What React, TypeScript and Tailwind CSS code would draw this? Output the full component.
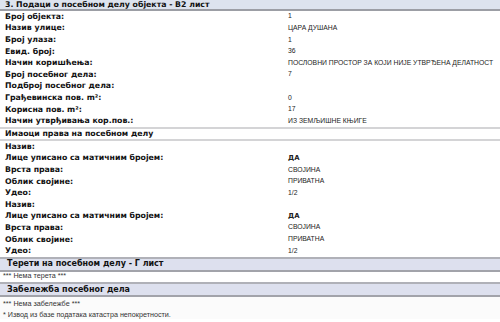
import React from 'react';

type Row = { label: string; value?: string; strong?: boolean };

const objectRows: Row[] = [
  { label: 'Број објекта:', value: '1' },
  { label: 'Назив улице:', value: 'ЦАРА ДУШАНА' },
  { label: 'Број улаза:', value: '1' },
  { label: 'Евид. број:', value: '36' },
  { label: 'Начин коришћења:', value: 'ПОСЛОВНИ ПРОСТОР ЗА КОЈИ НИЈЕ УТВРЂЕНА ДЕЛАТНОСТ' },
  { label: 'Број посебног дела:', value: '7' },
  { label: 'Подброј посебног дела:', value: '' },
  { label: 'Грађевинска пов. m²:', value: '0' },
  { label: 'Корисна пов. m²:', value: '17' },
  { label: 'Начин утврђивања кор.пов.:', value: 'ИЗ ЗЕМЉИШНЕ КЊИГЕ' },
];

const owner: Row[] = [
  { label: 'Назив:' },
  { label: 'Лице уписано са матичним бројем:', value: 'ДА', strong: true },
  { label: 'Врста права:', value: 'СВОЈИНА' },
  { label: 'Облик својине:', value: 'ПРИВАТНА' },
  { label: 'Удео:', value: '1/2' },
];

const labelFont = "font-['DejaVu_Sans',Verdana,sans-serif]";
const valueFont = "font-['Liberation_Sans',Tahoma,sans-serif]";

function DataRow({ row }: { row: Row }) {
  return (
    <div className="flex h-[11.6px] items-center leading-none">
      <div className={`${labelFont} w-[288px] shrink-0 pl-[5px] text-[7.8px] font-bold text-[#111]`}>{row.label}</div>
      <div
        className={`${row.strong ? labelFont + ' font-bold text-[6.9px]' : valueFont + ' text-[6.8px]'} whitespace-nowrap text-[#222]`}
      >
        {row.value}
      </div>
    </div>
  );
}

function SectionHeader({ title }: { title: string }) {
  return (
    <div className="flex h-[15px] items-center border-y-2 border-t-[#b0b1b8] border-b-[#a2a3aa] bg-[#dde0ee] pl-[7px] leading-none">
      <span className={`${labelFont} text-[8px] font-bold text-[#111]`}>{title}</span>
    </div>
  );
}

function Note({ text, className }: { text: string; className: string }) {
  return (
    <div className={`${valueFont} ${className} flex items-center pl-[3px] text-[7.2px] leading-none text-[#333]`}>
      {text}
    </div>
  );
}

export default function App() {
  return (
    <div className="h-[322px] w-[500px] overflow-hidden bg-white">
      <div className="flex h-[11px] items-center border-b-2 border-[#9c9ea5] bg-[#dde3ee] pl-[5px] leading-none">
        <span className={`${labelFont} text-[7.8px] font-bold text-[#111]`}>
          3. Подаци о посебном делу објекта - В2 лист
        </span>
      </div>
      <div>
        {objectRows.map((r, i) => (
          <DataRow key={i} row={r} />
        ))}
      </div>
      <div className="flex h-[14px] items-center border-y-2 border-[#d4d4d6] bg-white pl-[5px] leading-none">
        <span className={`${labelFont} text-[7.8px] font-bold text-[#111]`}>Имаоци права на посебном делу</span>
      </div>
      <div>
        {[...owner, ...owner].map((r, i) => (
          <DataRow key={i} row={r} />
        ))}
      </div>
      <SectionHeader title="Терети на посебном делу - Г лист" />
      <Note text="*** Нема терета ***" className="h-[10.4px] pb-[2px]" />
      <SectionHeader title="Забележба посебног дела" />
      <div className="bg-[#fbfbfb]">
        <Note text="*** Нема забележбе ***" className="h-[11px] pt-[1.5px]" />
        <Note text="* Извод из базе података катастра непокретности." className="h-[11px] pt-[1.5px]" />
      </div>
    </div>
  );
}
